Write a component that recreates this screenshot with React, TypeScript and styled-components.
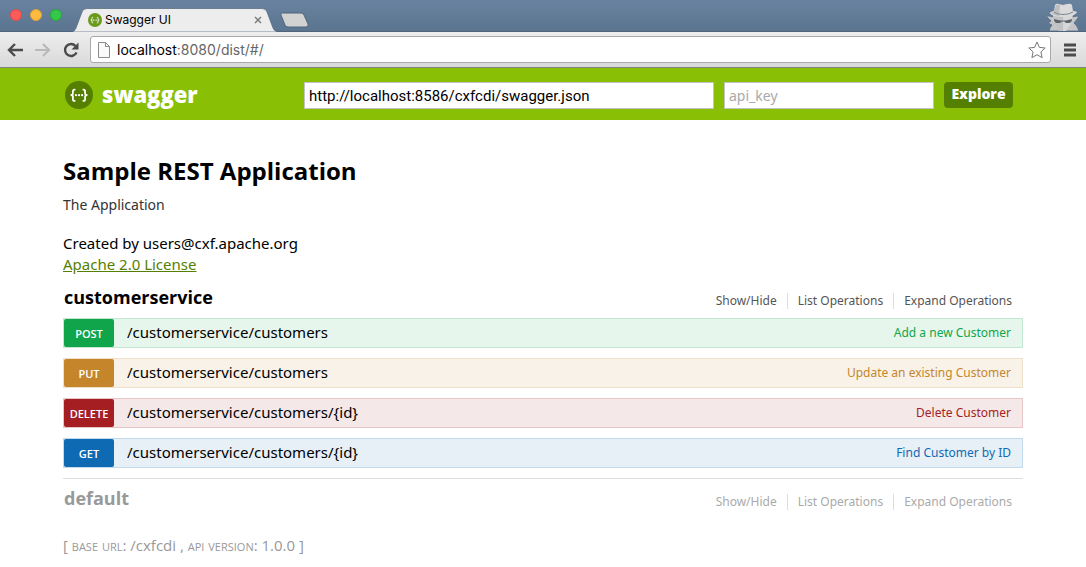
import React from "react";
import styled, { createGlobalStyle } from "styled-components";

const sans = `"Noto Sans", "Open Sans", sans-serif`;
const heading = `"Open Sans", "Noto Sans", sans-serif`;
const ui = `Inter, "Liberation Sans", sans-serif`;

const GlobalStyle = createGlobalStyle`
  * { box-sizing: border-box; }
  body { margin: 0; background: #fff; color: #000; font-family: ${sans}; }
  h1, h2, p, ul { margin: 0; padding: 0; }
  h1, h2 { font-family: ${heading}; }
  button { font: inherit; cursor: pointer; }
`;

const TabStrip = styled.header`
  display: flex;
  align-items: flex-end;
  height: 32px;
  padding: 0 5px 0 10px;
  background: linear-gradient(#6882a0, #5b7590);
  border-bottom: 1px solid #50657b;
`;

const WindowControls = styled.div`
  display: flex;
  gap: 8px;
  align-self: flex-start;
  padding-top: 9px;
`;

const ControlDot = styled.button<{ $color: string; $edge: string }>`
  width: 12px;
  height: 12px;
  padding: 0;
  border: 1px solid ${(p) => p.$edge};
  border-radius: 50%;
  background: ${(p) => p.$color};
`;

const Tab = styled.div`
  position: relative;
  display: flex;
  align-items: center;
  width: 206px;
  height: 24px;
  margin: 0 0 -1px 10px;
  padding: 0 16px 0 16px;
  font: 12px/16px ${ui};
`;

const TabShape = styled.svg`
  position: absolute;
  inset: 0;
`;

const TabTitle = styled.span`
  position: relative;
  flex: 1;
  margin-left: 3px;
`;

const Favicon = styled.svg`
  position: relative;
`;

const TabClose = styled.button`
  position: relative;
  display: flex;
  padding: 0;
  border: 0;
  background: none;
`;

const NewTab = styled.button`
  display: flex;
  margin: 0 auto 3px 0;
  padding: 0;
  border: 0;
  background: none;
`;

const Toolbar = styled.nav`
  display: flex;
  align-items: center;
  height: 36px;
  padding: 0 9px 0 7px;
  background: linear-gradient(#eeeeee, #d9d9d9);
  border-bottom: 1px solid #838383;
`;

const ToolButton = styled.button`
  display: flex;
  margin-right: 12px;
  padding: 0;
  border: 0;
  background: none;
`;

const MenuButton = styled(ToolButton)`
  margin: 0 0 0 12px;
`;

const AddressBar = styled.div`
  display: flex;
  flex: 1;
  align-items: center;
  height: 27px;
  margin-left: -1px;
  padding: 0 4px 0 7px;
  border: 1px solid #a9a9a9;
  border-radius: 3px;
  background: #fff;
  font: 14px/20px ${ui};
`;

const Address = styled.span`
  flex: 1;
  margin-left: 7px;
  color: #666;
  b { color: #000; font-weight: 400; }
`;

const Header = styled.header`
  display: flex;
  justify-content: center;
  padding: 13px 62px 11px;
  background: #89bf04;
`;

const HeaderInner = styled.form`
  display: flex;
  align-items: center;
  width: 100%;
  max-width: 960px;
  padding: 0 10px 0 2px;
`;

const Brand = styled.a`
  display: flex;
  align-items: center;
  gap: 9px;
  margin-right: auto;
  color: #fff;
  font-family: ${heading};
  font-size: 22px;
  font-weight: 800;
  line-height: 24px;
  text-decoration: none;
  span { padding-bottom: 3px; }
`;

const Field = styled.input<{ $width: number }>`
  align-self: flex-end;
  width: ${(p) => p.$width}px;
  height: 27px;
  margin-right: 10px;
  padding: 0 4px;
  border: 1px solid #c3c3c3;
  background: #fff;
  color: #000;
  font: 14px/20px ${sans};
  &[type="url"] { font: 15px/20px Roboto, ${ui}; }
  &::placeholder { color: #a9a9a9; }
`;

const Explore = styled.button`
  width: 69px;
  height: 26px;
  padding: 0 0 2px;
  border: 0;
  border-radius: 4px;
  background: #547f00;
  color: #fff;
  font-family: ${heading};
  font-size: 14px;
  font-weight: 800;
  line-height: 24px;
`;

const Page = styled.main`
  max-width: 1084px;
  margin: 0 auto;
  padding: 36px 62px 8px;
`;

const Title = styled.h1`
  font-size: 24px;
  line-height: 30px;
`;

const Description = styled.p`
  margin-top: 9px;
  color: #333;
  font-size: 14px;
  line-height: 20px;
`;

const Info = styled.div`
  margin-top: 18px;
  font-size: 15px;
  line-height: 21px;
  a { color: #547f00; }
`;

const Resource = styled.section<{ $muted?: boolean }>`
  color: ${(p) => (p.$muted ? "#999" : "#000")};
  border-top: ${(p) => (p.$muted ? "1px solid #ddd" : "0")};
  margin-top: ${(p) => (p.$muted ? "10px" : "4px")};
  padding-top: ${(p) => (p.$muted ? "1px" : "0")};
`;

const ResourceHead = styled.div`
  display: flex;
  align-items: center;
  justify-content: space-between;
  height: 36px;
  padding: 0 11px 0 1px;
`;

const ResourceName = styled.h2`
  font-size: 18px;
  line-height: 26px;
`;

const Options = styled.ul`
  display: flex;
  padding-top: 8px;
  list-style: none;
`;

const Option = styled.li<{ $muted?: boolean }>`
  padding: 0 10px;
  border-left: 1px solid #ddd;
  font-size: 12px;
  line-height: 16px;
  &:first-child { border-left: 0; }
  &:last-child { padding-right: 0; }
  a { color: ${(p) => (p.$muted ? "#aaa" : "#555")}; text-decoration: none; }
`;

const Operations = styled.div`
  display: grid;
  gap: 10px;
  padding-top: 3px;
`;

const Operation = styled.div<{ $bg: string; $line: string }>`
  display: flex;
  align-items: flex-start;
  height: 30px;
  padding-right: 11px;
  border: 1px solid ${(p) => p.$line};
  background: ${(p) => p.$bg};
`;

const Method = styled.button<{ $color: string }>`
  width: 50px;
  height: 28px;
  padding: 1px 0 0;
  border: 0;
  border-radius: 2px;
  background: ${(p) => p.$color};
  color: #fff;
  font-family: ${heading};
  font-size: 11px;
  font-weight: 600;
`;

const Path = styled.a`
  flex: 1;
  margin-left: 13px;
  color: #000;
  font-size: 15px;
  line-height: 26px;
  text-decoration: none;
`;

const Summary = styled.a<{ $color: string }>`
  color: ${(p) => p.$color};
  font-size: 12px;
  line-height: 28px;
  text-decoration: none;
`;

const Footer = styled.footer`
  margin-top: 19px;
  color: #999;
  font-family: ${heading};
  font-size: 15px;
  line-height: 20px;
  span { font-variant: small-caps; }
`;

const operations = [
  { method: "POST", path: "/customerservice/customers", summary: "Add a new Customer", color: "#10a54a", bg: "#e7f6ec", line: "#c3e8d1" },
  { method: "PUT", path: "/customerservice/customers", summary: "Update an existing Customer", color: "#c5862b", bg: "#f9f2e9", line: "#f0e0ca" },
  { method: "DELETE", path: "/customerservice/customers/{id}", summary: "Delete Customer", color: "#a41e22", bg: "#f5e8e8", line: "#e8c6c7" },
  { method: "GET", path: "/customerservice/customers/{id}", summary: "Find Customer by ID", color: "#0f6ab4", bg: "#e7f0f7", line: "#c3d9ec" },
];

const SwaggerMark = ({ fill }: { fill: string }) => (
  <>
    <circle cx="14" cy="14" r="14" fill={fill} />
    <g fill="none" stroke="#fff" strokeWidth="1.8">
      <path d="M10.4 8.7H9.6Q7.9 8.7 7.9 10.4V12.4Q7.9 14 5.6 14Q7.9 14 7.9 15.6V18.2Q7.9 19.9 9.6 19.9H10.4" />
      <path d="M17.6 8.7H18.4Q20.1 8.7 20.1 10.4V12.4Q20.1 14 22.4 14Q20.1 14 20.1 15.6V18.2Q20.1 19.9 18.4 19.9H17.6" />
    </g>
    <g fill="#fff">
      <circle cx="10.9" cy="14.2" r="1.1" />
      <circle cx="14" cy="14.2" r="1.1" />
      <circle cx="17.1" cy="14.2" r="1.1" />
    </g>
  </>
);

const Incognito = () => (
  <svg width="36" height="28" viewBox="0 0 36 28" aria-hidden="true">
    <path d="M2 14Q1 12 4 13L9 14H27L32 13Q34 13 33 15L29 20Q32 22 34 28H4Q5 24 7 22L3 20L6 18Z" fill="#c3c5c7" stroke="#51677f" strokeWidth=".8" />
    <path d="M8 12H28L26 21L21 28H14L9 21Z" fill="#d6d7d8" />
    <path d="M8 12H18V28H14L9 21Z" fill="#bfc1c3" />
    <path d="M10 2Q11 0 14 1L18 2L22 1Q26 0 27 2L28 8Q32 8 32 9.500Q28 14 18 14Q8 14 5 10.500Q4 9 9 8Z" fill="#dadada" />
    <path d="M11 2L15 1.500L14 13Q8 12 6 10L9 9Z" fill="#bcbec0" />
    <path d="M9 9Q12 11.500 18 11.500T28 9" fill="none" stroke="#7c858e" strokeWidth="1" />
    <path d="M9 16L15 17.500H21L27 16Q27 20 23.500 20Q20 20 19.500 18.500H16.500Q16 20 12.500 20Q9 20 9 16Z" fill="#5d6369" />
  </svg>
);

const OptionLinks = ({ muted }: { muted?: boolean }) => (
  <Options>
    {["Show/Hide", "List Operations", "Expand Operations"].map((label) => (
      <Option key={label} $muted={muted}>
        <a href="#/">{label}</a>
      </Option>
    ))}
  </Options>
);

export default function App() {
  return (
    <>
      <GlobalStyle />
      <TabStrip>
        <WindowControls>
          <ControlDot aria-label="Close window" $color="#fc5b57" $edge="#e2494a" />
          <ControlDot aria-label="Minimize window" $color="#fdbc40" $edge="#df9f3a" />
          <ControlDot aria-label="Zoom window" $color="#34c84a" $edge="#27aa35" />
        </WindowControls>
        <Tab>
          <TabShape width="206" height="24" viewBox="0 0 206 24" aria-hidden="true">
            <path d="M0 24Q3 23 4 20L10 4Q11 .5 15 .5H190Q194 .5 195 4L201 20Q202 23 206 24Z" fill="#ededed" stroke="#50657b" strokeWidth=".7" />
          </TabShape>
          <Favicon width="14" height="14" viewBox="0 0 28 28" aria-hidden="true">
            <SwaggerMark fill="#6a9a1a" />
          </Favicon>
          <TabTitle>Swagger UI</TabTitle>
          <TabClose aria-label="Close tab">
            <svg width="8" height="8" viewBox="0 0 8 8"><path d="M1 1L7 7M7 1L1 7" stroke="#7c7c7c" strokeWidth="1.500" /></svg>
          </TabClose>
        </Tab>
        <NewTab aria-label="New tab">
          <svg width="32" height="16" viewBox="0 0 32 16"><path d="M4 1H23Q25 1 26 3L30 12Q31 15 28 15H10Q8 15 7 13L3 3Q2 1 4 1Z" fill="#d2d2d2" stroke="#50657b" /></svg>
        </NewTab>
        <Incognito />
      </TabStrip>
      <Toolbar>
        <ToolButton aria-label="Back">
          <svg width="16" height="14" viewBox="0 0 16 14"><path d="M8 1L2 7L8 13M2 7H16" fill="none" stroke="#4b4b4b" strokeWidth="2.400" /></svg>
        </ToolButton>
        <ToolButton aria-label="Forward">
          <svg width="16" height="14" viewBox="0 0 16 14"><path d="M8 1L14 7L8 13M14 7H0" fill="none" stroke="#b9b9b9" strokeWidth="2.200" /></svg>
        </ToolButton>
        <ToolButton aria-label="Reload">
          <svg width="16" height="16" viewBox="0 0 16 16"><path d="M13.500 10.500A6 6 0 1 1 12.500 4" fill="none" stroke="#4b4b4b" strokeWidth="2.400" /><path d="M15.500 .5V7.500H8.500Z" fill="#4b4b4b" /></svg>
        </ToolButton>
        <AddressBar>
          <svg width="12" height="16" viewBox="0 0 12 16" aria-hidden="true"><path d="M.5 .5H7.500L11.500 4.500V15.500H.5ZM7.500 .5V4.500H11.500" fill="#fafafa" stroke="#8b8b8b" /></svg>
          <Address><b>localhost</b>:8080/dist/#/</Address>
          <svg width="18" height="18" viewBox="0 0 18 18" aria-hidden="true"><path d="M9 1L11.400 6.400L17.200 7L12.900 10.900L14.100 16.700L9 13.700L3.900 16.700L5.100 10.900L.8 7L6.600 6.400Z" fill="#fff" stroke="#777" strokeLinejoin="round" /></svg>
        </AddressBar>
        <MenuButton aria-label="Menu">
          <svg width="14" height="14" viewBox="0 0 14 14"><path d="M1 2H13M1 7H13M1 12H13" stroke="#4b4b4b" strokeWidth="3" /></svg>
        </MenuButton>
      </Toolbar>
      <Header>
        <HeaderInner>
          <Brand href="#/">
            <svg width="28" height="28" viewBox="0 0 28 28" aria-hidden="true"><SwaggerMark fill="#547f00" /></svg>
            <span>swagger</span>
          </Brand>
          <Field type="url" aria-label="Definition URL" $width={410} defaultValue="http://localhost:8586/cxfcdi/swagger.json" />
          <Field type="text" aria-label="API key" $width={210} placeholder="api_key" />
          <Explore type="button">Explore</Explore>
        </HeaderInner>
      </Header>
      <Page>
        <Title>Sample REST Application</Title>
        <Description>The Application</Description>
        <Info>
          <p>Created by users@cxf.apache.org</p>
          <p><a href="#/">Apache 2.0 License</a></p>
        </Info>
        <Resource>
          <ResourceHead>
            <ResourceName>customerservice</ResourceName>
            <OptionLinks />
          </ResourceHead>
          <Operations>
            {operations.map((op) => (
              <Operation key={op.method} $bg={op.bg} $line={op.line}>
                <Method $color={op.color}>{op.method}</Method>
                <Path href="#/">{op.path}</Path>
                <Summary href="#/" $color={op.color}>{op.summary}</Summary>
              </Operation>
            ))}
          </Operations>
        </Resource>
        <Resource $muted>
          <ResourceHead>
            <ResourceName>default</ResourceName>
            <OptionLinks muted />
          </ResourceHead>
        </Resource>
        <Footer>
          [ <span>base url</span>: /cxfcdi , <span>api version</span>: 1.0.0 ]
        </Footer>
      </Page>
    </>
  );
}
